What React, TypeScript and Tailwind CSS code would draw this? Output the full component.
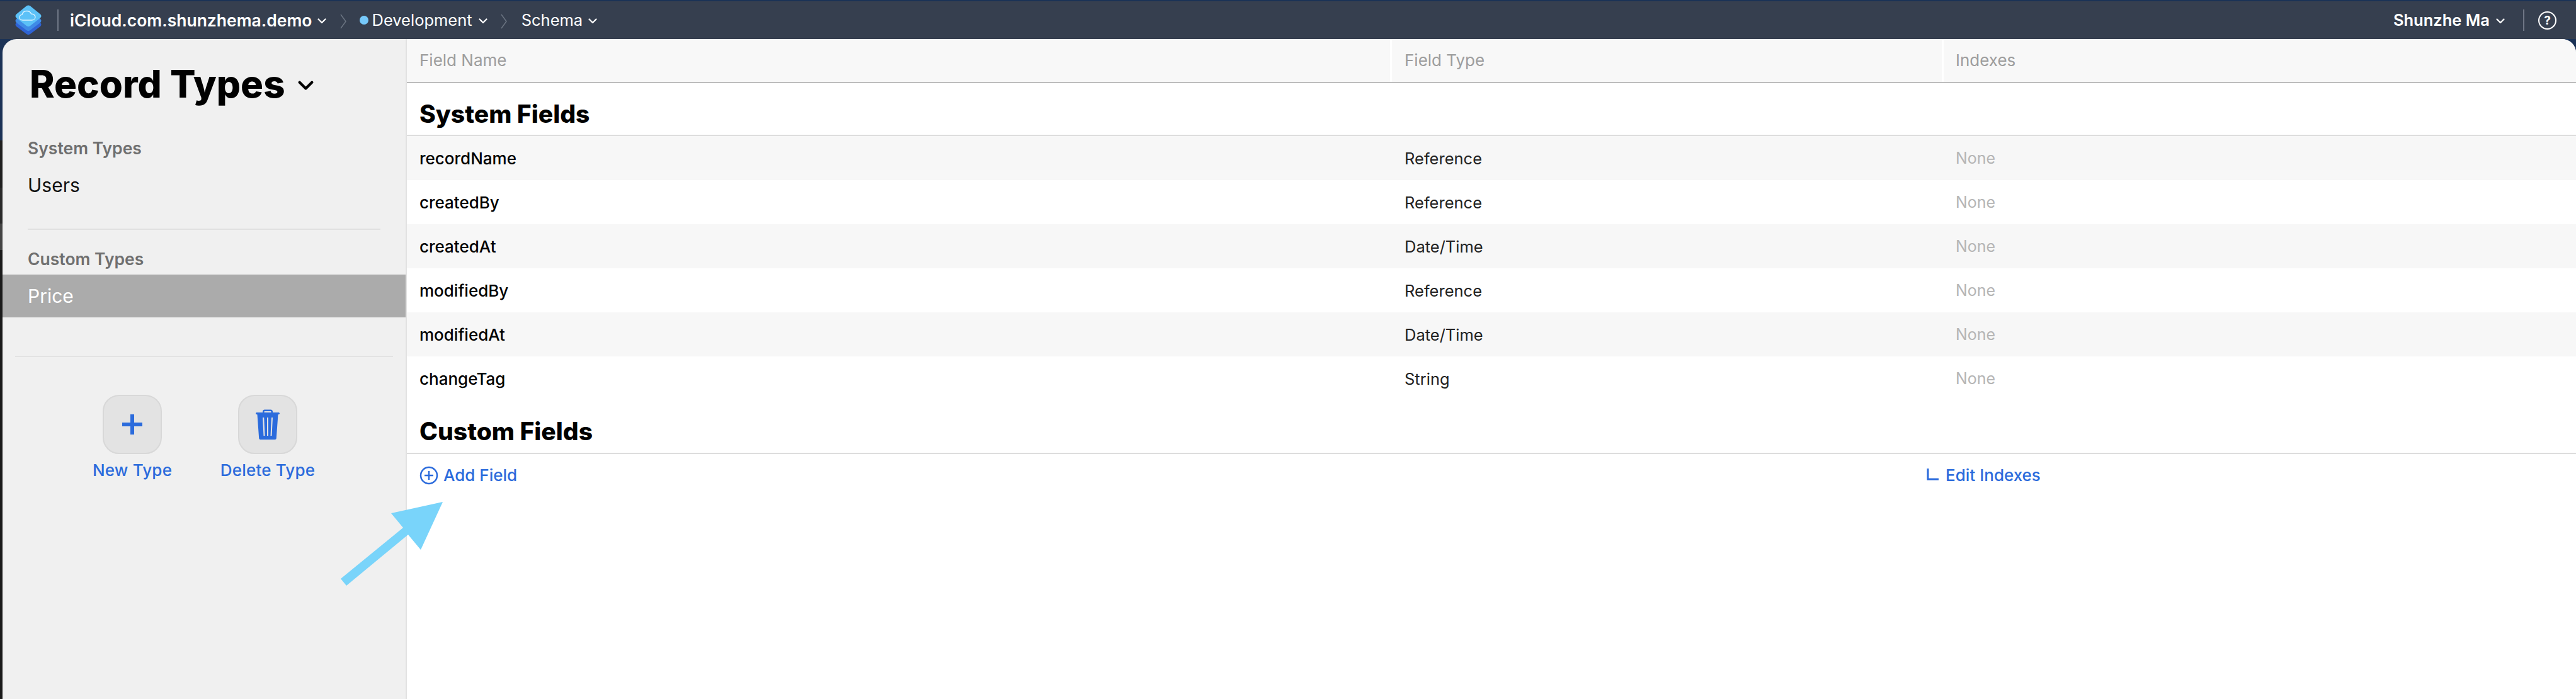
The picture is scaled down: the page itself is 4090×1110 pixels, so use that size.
const F = "font-['Inter','Noto_Sans',sans-serif]";
const blue = "text-[#2b6bdc]";

function Chevron({ className = "", w = 14, sw = 2.2 }: { className?: string; w?: number; sw?: number }) {
  return (
    <svg width={w} height={Math.round(w * 0.65)} viewBox="0 0 14 9" fill="none" className={className}>
      <path d="M1.500 1.500 7 7l5.500-5.500" stroke="currentColor" strokeWidth={sw} strokeLinecap="round" strokeLinejoin="round" />
    </svg>
  );
}

function Crumb() {
  return (
    <svg width="10" height="24" viewBox="0 0 10 24" fill="none" className="mt-[3px]">
      <path d="M1 1 9 12 1 23" stroke="#6b7482" strokeWidth="1.500" />
    </svg>
  );
}

function Logo() {
  return (
    <svg width="44" height="48" viewBox="0 0 44 48">
      <path d="M22 12 41 28c2 2 2 4 0 6L25 46c-2 1.500-4 1.500-6 0L3 34c-2-2-2-4 0-6Z" fill="#2f63d4" />
      <path d="M22 7 41 22c2 2 2 4 0 6L25 40c-2 1.500-4 1.500-6 0L3 28c-2-2-2-4 0-6Z" fill="#3f8be6" />
      <path d="M19 1.500c2-1.500 4-1.500 6 0l16 13c2 2 2 4 0 6L25 33c-2 1.500-4 1.500-6 0L3 20.500c-2-2-2-4 0-6Z" fill="#5cc1f7" />
      <path d="M13 24c-3 0-5-2-5-4.500 0-2.300 1.700-4 4-4.200C13 11.500 16 9.500 19.500 9.500c3.500 0 6 1.800 7 4.500 3.500 0 6.500 2 6.500 5 0 3-2.500 5-5.500 5Z" fill="none" stroke="#d9f2ff" strokeWidth="1.300" />
    </svg>
  );
}

const rows = [
  ["recordName", "Reference"],
  ["createdBy", "Reference"],
  ["createdAt", "Date/Time"],
  ["modifiedBy", "Reference"],
  ["modifiedAt", "Date/Time"],
  ["changeTag", "String"],
];

function ActionButton({ label, children }: { label: string; children: React.ReactNode }) {
  return (
    <div className="flex w-[170px] flex-col items-center">
      <div className="flex h-[94px] w-[94px] items-center justify-center rounded-[26px] border-2 border-[#d8d8d8] bg-[#e3e3e3]">
        {children}
      </div>
      <div className={`mt-[8px] text-[26px] font-medium leading-[36px] tracking-[0.2px] ${blue}`}>{label}</div>
    </div>
  );
}

export default function App() {
  return (
    <div className={`${F} relative flex h-[1110px] w-[4090px] flex-col overflow-hidden bg-[linear-gradient(#1b3256_0,#1b3256_223px,#1f1f1f_223px,#1f1f1f_298px,#2a2a2a_298px,#2a2a2a_355px,#444_355px,#444_397px,#1a1a1a_397px)]`}>
      <header className="mt-[2px] flex h-[60px] shrink-0 items-center bg-[#363f4f] pl-[23px] pr-[31px] text-white">
        <Logo />
        <div className="ml-[24px] h-[34px] w-[2px] bg-[#6f7786]" />
        <span className="ml-[18px] text-[26.5px] font-semibold leading-none">iCloud.com.shunzhema.demo</span>
        <Chevron className="ml-[9px] mt-[2px]" />
        <div className="ml-[22px]"><Crumb /></div>
        <span className="ml-[21px] h-[14px] w-[14px] rounded-full bg-[#76c9fb]" />
        <span className="ml-[5px] text-[25.500px] font-normal leading-none">Development</span>
        <Chevron className="ml-[10px] mt-[2px]" />
        <div className="ml-[21px]"><Crumb /></div>
        <span className="ml-[23px] text-[25.500px] font-normal leading-none">Schema</span>
        <Chevron className="ml-[9px] mt-[2px]" />
        <div className="flex-1" />
        <span className="text-[25.500px] font-semibold leading-none">Shunzhe Ma</span>
        <Chevron className="ml-[10px] mt-[3px]" />
        <div className="ml-[29px] h-[34px] w-[2px] bg-[#6f7786]" />
        <div className="ml-[22px] flex h-[29px] w-[29px] items-center justify-center rounded-full border-[2.5px] border-white text-[19px] font-bold leading-none">?</div>
      </header>

      <div className="ml-[4px] flex min-h-0 flex-1 overflow-hidden rounded-t-[22px]">
        <aside className="flex w-[642px] shrink-0 flex-col border-r-[2px] border-[#e2e2e2] bg-[#f0f0f0]">
          <div className="ml-[43px] mt-[29px] flex items-center text-black">
            <h1 className="text-[60px] font-extrabold leading-[84px]">Record Types</h1>
            <Chevron className="ml-[20px] mt-[6px]" w={25} sw={2.4} />
          </div>
          <div className="ml-[40px] mt-[45px] text-[26.5px] font-semibold leading-[30px] text-[#6f6f6f]">System Types</div>
          <div className="ml-[40px] mt-[10px] flex h-[68px] items-center text-[30px] leading-none text-[#111]">Users</div>
          <div className="ml-[40px] mr-[40px] mt-[35px] h-[2px] bg-[#e0e0e0]" />
          <div className="ml-[40px] mt-[31px] text-[26.5px] font-semibold leading-[30px] text-[#6f6f6f]">Custom Types</div>
          <div className="mt-[10px] flex h-[68px] items-center bg-[#ababab] pl-[40px] text-[30px] leading-none text-white">Price</div>
          <div className="mx-[20px] mt-[61px] h-[2px] bg-[#e3e3e3]" />
          <div className="ml-[121px] mt-[60px] flex gap-[45px]">
            <ActionButton label="New Type">
              <svg width="34" height="34" viewBox="0 0 34 34"><path d="M14 1h6v13h13v6H20v13h-6V20H1v-6h13Z" fill="#2b6bdc" /></svg>
            </ActionButton>
            <ActionButton label="Delete Type">
              <svg width="38" height="48" viewBox="0 0 38 48">
                <path fillRule="evenodd" d="M11 5V3.500C11 1.800 12.500.500 14 .500h10c1.500 0 3 1.300 3 3V5h9c1.200 0 2 .7 2 1.600 0 .9-.8 1.600-2 1.600h-.5l-2.700 37.500c-.1 1.300-1 2.300-2.300 2.300H7.500c-1.300 0-2.200-1-2.300-2.300L2.500 8.200H2C.8 8.200 0 7.500 0 6.600 0 5.700.8 5 2 5Zm2.500 0h11V3.800c0-.5-.3-.8-.8-.8h-9.400c-.5 0-.8.300-.8.800ZM11 13l1.500 29h2L13.200 13Zm7 0v29h2V13Zm7 0-1.500 29h2L27 13Z" fill="#2b6bdc" />
              </svg>
            </ActionButton>
          </div>
        </aside>

        <main className="min-w-0 flex-1 bg-white">
          <div className="flex h-[70px] items-stretch border-b-2 border-[#bdbdbd] bg-[#f8f8f8] pl-[20px] text-[26px] leading-none text-[#9d9d9d]">
            <div className="flex w-[1541px] items-center">Field Name</div>
            <div className="flex w-[876px] items-center border-l-[3px] border-white pl-[20px]">Field Type</div>
            <div className="flex items-center border-l-[3px] border-white pl-[19px]">Indexes</div>
          </div>
          <div className="flex h-[84px] items-center border-b-2 border-[#dddddd] pl-[20px] pt-[14px] text-[39px] font-extrabold leading-none text-black">System Fields</div>
          {rows.map(([name, type], i) => (
            <div key={name} className={`flex h-[70px] items-center pl-[20px] pt-[1px] leading-none ${i % 2 === 0 ? "bg-[#f7f7f7]" : "bg-white"}`}>
              <div className="w-[1564px] text-[26px] font-medium text-black">{name}</div>
              <div className="w-[875px] text-[25.500px] text-[#222]">{type}</div>
              <div className="text-[25px] text-[#b5b5b5]">None</div>
            </div>
          ))}
          <div className="flex h-[85px] items-center border-b-2 border-[#dddddd] pl-[20px] pt-[14px] text-[39px] font-extrabold leading-none text-black">Custom Fields</div>
          <div className={`flex h-[68px] items-center pl-[20px] text-[26px] font-medium leading-none ${blue}`}>
            <svg width="30" height="30" viewBox="0 0 30 30" fill="none" stroke="#2b6bdc" strokeWidth="2.500">
              <circle cx="15" cy="15" r="13" /><path d="M15 8v14M8 15h14" />
            </svg>
            <span className="ml-[8px]">Add Field</span>
            <svg width="20" height="20" viewBox="0 0 20 20" fill="none" stroke="#2b6bdc" strokeWidth="3" className="ml-[2238px] mb-[4px]">
              <path d="M2 1v17h17" />
            </svg>
            <span className="ml-[10px]">Edit Indexes</span>
          </div>
        </main>
      </div>

      <svg width="170" height="140" viewBox="0 0 170 140" className="absolute left-[538px] top-[795px]">
        <path d="M165 2 130 78 110 54 12 135 3 124 102 43 83 20Z" fill="#79d4fa" />
      </svg>
    </div>
  );
}
